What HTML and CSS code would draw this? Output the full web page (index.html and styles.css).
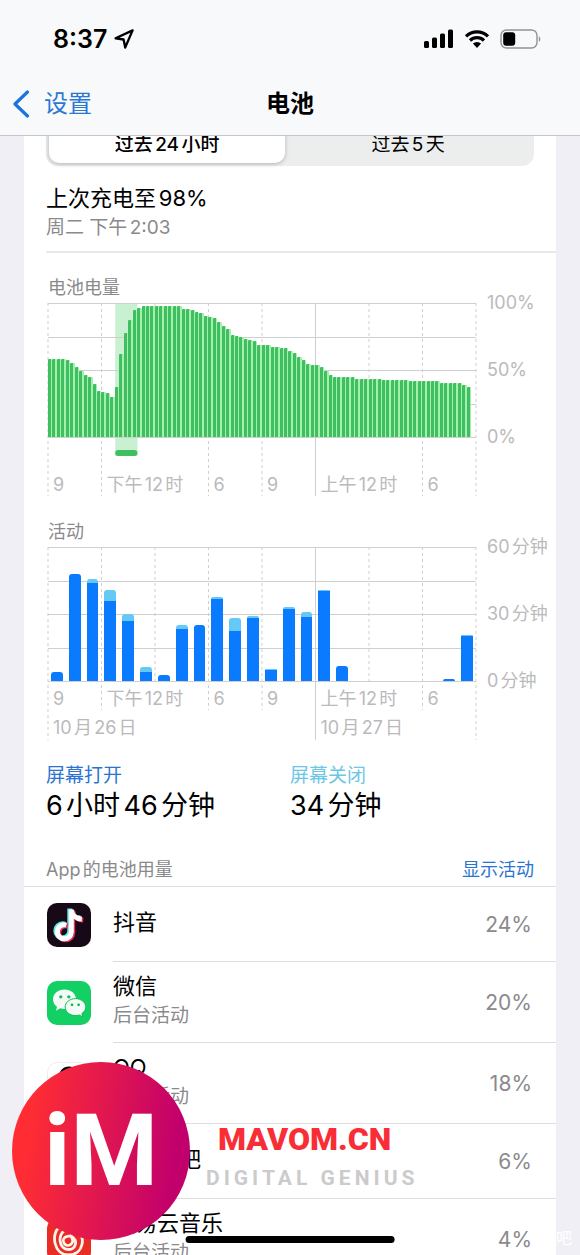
FILE: index.html
```html
<!DOCTYPE html>
<html lang="zh-CN">
<head>
<meta charset="utf-8">
<meta name="viewport" content="width=device-width, initial-scale=1">
<title>电池</title>
<link rel="stylesheet" href="styles.css">
</head>
<body>
<div class="screen">
  <header class="topbar">
    <div class="status">
      <div class="status-time">
        <span>8:37</span>
        <svg class="arrow" viewBox="0 0 20 20" aria-hidden="true"><path d="M18.6 1.4 1.6 9.300l8 1.200 1.600 8z" fill="none" stroke="#000" stroke-width="2.300" stroke-linejoin="round"/></svg>
      </div>
      <div class="status-icons">
        <svg class="signal" viewBox="0 0 30 20" aria-hidden="true"><rect x="0" y="12" width="5" height="7" rx="1.5"/><rect x="8" y="8.500" width="5" height="10.500" rx="1.500"/><rect x="16" y="4.500" width="5" height="14.500" rx="1.500"/><rect x="24" y="0.500" width="5" height="18.500" rx="1.500"/></svg>
        <svg class="wifi" viewBox="0 0 26 20" aria-hidden="true"><path d="M2 7.400a15.800 15.800 0 0 1 22 0M6 11.500a10 10 0 0 1 14 0" fill="none" stroke="#000" stroke-width="3.200"/><path d="M8.900 14.600a6 6 0 0 1 8.200 0L13 19z"/></svg>
        <svg class="battery" viewBox="0 0 42 20" aria-hidden="true"><rect x="1" y="1" width="36" height="18" rx="5.500" fill="none" stroke="#929395" stroke-width="1.400"/><rect x="3.200" y="3.200" width="12" height="13.600" rx="3"/><path d="M38.800 7.200c2 .7 2 4.900 0 5.600z" fill="#929395"/></svg>
      </div>
    </div>
    <nav class="nav">
      <a class="back" href="#settings">
        <svg viewBox="0 0 18 28" aria-hidden="true"><path d="M15.500 2 3 14l12.500 12" fill="none" stroke="#1d74dd" stroke-width="3.200" stroke-linecap="round" stroke-linejoin="round"/></svg>
        <span>设置</span>
      </a>
      <h1>电池</h1>
    </nav>
  </header>

  <main class="content">
    <section class="card">
      <div class="segmented">
        <button class="segment selected" type="button" aria-pressed="true">过去24小时</button>
        <button class="segment" type="button" aria-pressed="false">过去5天</button>
      </div>

      <div class="charge">
        <h2>上次充电至98%</h2>
        <p>周二 下午2:03</p>
      </div>

      <h3 class="chart-title">电池电量</h3>
      <div class="chart">
        <div class="plot-area">
          <svg class="grid" id="battery-grid" aria-hidden="true"></svg>
          <div class="bars" id="battery-bars"></div>
          <div class="hours low"><span>9</span><span>下午12时</span><span></span><span>6</span><span>9</span><span>上午12时</span><span></span><span>6</span></div>
        </div>
        <div class="axis"><span>100%</span><span>50%</span><span>0%</span></div>
      </div>

      <h3 class="chart-title second">活动</h3>
      <div class="chart">
        <div class="plot-area">
          <svg class="grid" id="activity-grid" aria-hidden="true"></svg>
          <div class="bars" id="activity-bars"></div>
          <div class="hours"><span>9</span><span>下午12时</span><span></span><span>6</span><span>9</span><span>上午12时</span><span></span><span>6</span></div>
          <div class="hours"><span>10月26日</span><span></span><span></span><span></span><span></span><span>10月27日</span></div>
        </div>
        <div class="axis"><span>60分钟</span><span>30分钟</span><span>0分钟</span></div>
      </div>

      <dl class="totals">
        <div><dt class="on">屏幕打开</dt><dd>6小时46分钟</dd></div>
        <div><dt class="off">屏幕关闭</dt><dd>34分钟</dd></div>
      </dl>

      <div class="usage-head">
        <h3>App的电池用量</h3>
        <button type="button">显示活动</button>
      </div>
      <ul class="apps">
        <li>
          <svg class="icon" viewBox="0 0 44 44" aria-hidden="true"><rect width="44" height="44" rx="10" fill="#170915"/><g fill="none" stroke-width="5"><g stroke="#5ee9e6"><path d="M22.800 5.500V28a7 7 0 1 1-7-7.200c1 0 1.400.1 2 .3M22.800 6c.6 5 4.600 8.700 10.500 9"/></g><g stroke="#f0305a"><path d="M25.700 7.500V30a7 7 0 1 1-7-7.200c1 0 1.400.1 2 .3M25.700 8c.6 5 4.600 8.700 10.500 9"/></g><g stroke="#fff"><path d="M24.300 6.500V29a7 7 0 1 1-7-7.200c1 0 1.400.1 2 .3M24.300 7c.6 5 4.600 8.700 10.500 9"/></g></g></svg>
          <div class="row"><div class="name"><b>抖音</b></div><span class="pct">24%</span></div>
        </li>
        <li>
          <svg class="icon" viewBox="0 0 44 44" aria-hidden="true"><rect width="44" height="44" rx="10" fill="#12d063"/><path d="M17.500 8.500C10.900 8.500 6 12.800 6 18.200c0 3 1.500 5.700 4 7.500l-1 4 4.300-2.400c1.400.4 2.800.6 4.200.6 6.400 0 11.500-4.300 11.500-9.700S23.900 8.500 17.500 8.500z" fill="#f4fbf6"/><path d="M28.500 17.600c-5.800 0-10.300 3.800-10.300 8.500s4.500 8.500 10.300 8.500c1.200 0 2.500-.2 3.700-.6l3.600 1.900-.9-3.400c2.400-1.600 3.900-3.900 3.900-6.400 0-4.700-4.700-8.500-10.300-8.500z" fill="#f4fbf6" stroke="#12b95a"/><g fill="#12b95a"><circle cx="13.800" cy="15.800" r="1.600"/><circle cx="21.800" cy="15.800" r="1.600"/><circle cx="25" cy="23.800" r="1.400"/><circle cx="31.600" cy="23.800" r="1.400"/></g></svg>
          <div class="row"><div class="name"><b>微信</b><small>后台活动</small></div><span class="pct">20%</span></div>
        </li>
        <li>
          <svg class="icon" viewBox="0 0 44 44" aria-hidden="true"><rect x=".5" y=".5" width="43" height="43" rx="10" fill="#fff" stroke="#ececee"/><path d="M22 4.500c-6 0-10 4.300-10 10.500 0 3-4 7-4 12 0 2 1 3 3 0 1 7 6 11 11 11s10-4 11-11c2 3 3 2 3 0 0-5-4-9-4-12 0-6.200-4-10.500-10-10.500z"/></svg>
          <div class="row"><div class="name"><b>QQ</b><small>后台活动</small></div><span class="pct">18%</span></div>
        </li>
        <li>
          <svg class="icon" viewBox="0 0 44 44" aria-hidden="true"><rect width="44" height="44" rx="10" fill="#2f7df6"/></svg>
          <div class="row"><div class="name"><b>百度贴吧</b></div><span class="pct">6%</span></div>
        </li>
        <li>
          <svg class="icon" viewBox="0 0 44 44" aria-hidden="true"><rect width="44" height="44" rx="10" fill="#ea2d24"/><path d="M27.500 4.500c-3-1.500-5.500.5-5 3.500l2.500 12.500a4.600 4.600 0 1 1-7-1.200c2-1.600 6-1.800 8.300.4 4.600 4.400 1.600 11.800-4.300 11.800C11 31.500 10.500 15.500 18.500 12M12 9.500C4 15.500 6.500 37 21.500 37 37 37 39 18 30 12" fill="none" stroke="#fff3ea" stroke-width="2.800" stroke-linecap="round"/></svg>
          <div class="row"><div class="name"><b>网易云音乐</b><small>后台活动</small></div><span class="pct">4%</span></div>
        </li>
      </ul>
    </section>
  </main>

  <div class="brand">
    <div class="disc">iM</div>
    <div class="brand-text"><strong>MAVOM.CN</strong><span>DIGITAL GENIUS</span></div>
  </div>
  <div class="home-indicator"></div>
  <span class="credit">吧</span>
</div>
<script src="app.js"></script>
</body>
</html>
```
FILE: styles.css
```css
* { box-sizing: border-box; }

body {
  margin: 0;
  background: #f0eff5;
  color: #000;
  font-family: Inter, "Noto Sans CJK SC", sans-serif;
  text-autospace: normal;
}

h1, h2, h3, p, ul, dl, dd { margin: 0; padding: 0; font-weight: 400; }

button {
  border: 0;
  padding: 0;
  background: none;
  color: inherit;
  font: inherit;
  text-autospace: inherit;
}

.screen {
  position: relative;
  display: flex;
  flex-direction: column;
  height: 100vh;
  overflow: hidden;
}

.topbar {
  flex: none;
  background: #f8f9fa;
  border-bottom: 1px solid #c6c6c9;
}

.status {
  display: flex;
  align-items: center;
  justify-content: space-between;
  height: 78px;
  padding: 0 38px 0 53px;
}

.status-time {
  display: flex;
  align-items: center;
  gap: 7px;
  font-size: 25px;
  font-weight: 600;
}

.arrow { width: 20px; height: 20px; }
.status-icons { display: flex; align-items: center; gap: 10px; }
.signal { width: 30px; height: 20px; }
.wifi { width: 26px; height: 20px; }
.battery { width: 42px; height: 20px; }

.nav {
  display: grid;
  grid-template-columns: 1fr auto 1fr;
  align-items: center;
  height: 57px;
  padding: 0 12px 5px;
}

.nav h1 { font-size: 24px; line-height: 36px; font-weight: 700; }

.back {
  display: flex;
  align-items: center;
  gap: 14px;
  color: #2a78d3;
  font-size: 24px;
  line-height: 36px;
  text-decoration: none;
}

.back svg { width: 18px; height: 28px; }

.content {
  flex: 1;
  min-height: 0;
  padding: 0 24px;
  overflow: hidden auto;
  scrollbar-width: none;
}

.card {
  margin-top: -16px;
  background: #fff;
}

.segmented {
  display: grid;
  grid-template-columns: 49fr 51fr;
  height: 46px;
  margin: 0 22px;
  padding: 3px;
  border-radius: 12px;
  background: #eceeee;
}

.segment {
  padding-top: 4px;
  border-radius: 10px;
  font-size: 19px;
  line-height: 36px;
}

.segment.selected {
  background: #fff;
  font-weight: 500;
  box-shadow: 0 1px 4px #00000040;
}

.charge {
  margin-left: 22px;
  padding: 16px 0 9px;
  border-bottom: 2px solid #e9e9ea;
}

.charge h2 { font-size: 22px; line-height: 32px; }
.charge p { color: #8a8a8c; font-size: 19px; line-height: 28px; }

.chart-title {
  margin: 22px 24px 2px;
  color: #8a8a8c;
  font-size: 18px;
  line-height: 26px;
}

.chart-title.second { margin-top: 23px; }

.chart {
  display: grid;
  grid-template-columns: 1fr 80px;
  padding-left: 24px;
  color: #bababc;
  font-size: 18px;
}

.plot-area { position: relative; height: 193px; }

.grid {
  position: absolute;
  inset: 0;
  width: 100%;
  height: 100%;
  overflow: visible;
}

.bars {
  position: relative;
  display: flex;
  align-items: flex-end;
  height: 134px;
}

.slot {
  flex: 1;
  background: linear-gradient(to right, #40bf60 0 66%, #a4f0ae 66%);
  border-radius: 1px 1px 0 0;
}

.hour {
  flex: 1;
  display: flex;
  flex-direction: column;
  height: 100%;
  justify-content: flex-end;
  padding: 0 3px;
}

.hour i:first-child { border-radius: 3px 3px 0 0; }
.hour .dark { background: #0a7aff; }
.hour .light { background: #64c9f5; }

.hours {
  position: relative;
  display: grid;
  grid-template-columns: repeat(8, 1fr);
  height: 29px;
  line-height: 36px;
  white-space: nowrap;
}

.hours span { width: 0; padding-left: 5px; }
.hours.low { margin-top: 30px; }

.axis {
  display: flex;
  flex-direction: column;
  justify-content: space-between;
  height: 154px;
  margin-top: -10px;
  padding-left: 11px;
  line-height: 20px;
  white-space: nowrap;
}

.totals {
  display: grid;
  grid-template-columns: 1fr 1fr;
  padding: 22px 22px 0;
}

.totals dt { font-size: 19px; line-height: 28px; }
.totals dd { font-size: 27px; line-height: 32px; }
.totals .on { color: #2a74d0; }
.totals .off { color: #6cc6e6; }

.usage-head {
  display: flex;
  justify-content: space-between;
  padding: 35px 22px 3px;
  border-bottom: 1px solid #dedee0;
  font-size: 18px;
  line-height: 26px;
}

.usage-head h3 { color: #8a8a8c; font-size: 18px; }
.usage-head button { color: #2a74d0; }

.apps { list-style: none; }

.apps li {
  display: flex;
  align-items: center;
  gap: 22px;
  padding-left: 23px;
}

.icon { flex: none; width: 44px; height: 44px; }

.row {
  flex: 1;
  display: flex;
  align-items: center;
  justify-content: space-between;
  min-height: 75px;
  padding: 8px 24px 8px 0;
  border-bottom: 1px solid #dedee0;
}

.name { display: flex; flex-direction: column; padding-bottom: 4px; }
.name b { font-size: 22px; line-height: 32px; font-weight: 400; }
.name small { color: #8a8a8c; font-size: 19px; line-height: 28px; }
.pct { color: #8a8a8c; font-size: 21px; }

.brand {
  position: absolute;
  left: 12px;
  bottom: 15px;
  display: flex;
  align-items: center;
  gap: 16px;
}

.disc {
  width: 178px;
  height: 178px;
  border-radius: 50%;
  background: linear-gradient(97deg, #ff2d33 12%, #c2006c 88%);
  color: #fff;
  font: 700 100px/178px Roboto, sans-serif;
  text-align: center;
}

.brand-text {
  display: flex;
  flex-direction: column;
  padding-top: 14px;
  font-family: Roboto, sans-serif;
  font-weight: 700;
}

.brand-text strong { padding-left: 12px; color: #f82d35; font-size: 32px; line-height: 40px; }
.brand-text span { color: #cbcbcb; font-size: 21px; line-height: 38px; letter-spacing: 4px; }

.home-indicator {
  position: absolute;
  left: 50%;
  bottom: 12px;
  width: 36%;
  height: 7px;
  border-radius: 4px;
  background: #000;
  transform: translateX(-50%);
}

.credit {
  position: absolute;
  right: 8px;
  bottom: 5px;
  color: #fff;
  font-size: 16px;
  line-height: 24px;
}
```
FILE: app.js
```js
// Battery level in percent, one value per quarter hour.
const levels = [
  58.5, 58.5, 58.5, 58.5, 57.5, 55.5, 52.5, 49.5, 46.5, 44.5, 39.5, 34.5, 33.5, 32.5, 29.5,
  37.5, 62, 77.5, 87.5, 94.5, 96.5, 97.5, 97.5, 97.5, 97.5, 97.5, 97.5, 97.5, 97.5, 97.5,
  95.5, 95.5, 94.5, 93.5, 92.5, 90.5, 89.5, 88.5, 85.5, 82.5, 80.5, 76.5, 75.5, 74.5, 73.5,
  72.5, 71.5, 68.5, 68.5, 68.5, 67.5, 67.5, 66.5, 66.5, 64.5, 62.5, 59.5, 57.5, 54.5, 53.5,
  53.5, 52.5, 49.5, 46.5, 44.5, 44.5, 44.5, 44.5, 44.5, 43.5, 43.5, 43.5, 43.5, 43.5, 43.5,
  42.5, 42.5, 42.5, 42.5, 42.5, 42.5, 41.5, 41.5, 41.5, 41.5, 41.5, 41.5, 41.5,
  40.5, 40.5, 40.5, 40.5, 40.5, 38.5, 37.5, 0
];

// Activity per hour as [screen on, screen off], in percent of an hour.
const activity = [
  [6.5, 0], [80, 0], [73, 3], [60, 8], [44.5, 5.5], [6.5, 4], [4.7, 0], [38.5, 3],
  [41.5, 0], [61.5, 1], [37, 10], [47, 1.5], [8, 1], [53.5, 2], [48, 3.5], [67, 1],
  [11.5, 0], [0, 0], [0, 0], [0, 0], [0, 0], [0, 0], [1.5, 0], [33.5, 1]
];

const plotHeight = 134;

function line(x1, y1, x2, y2, dashed) {
  const dash = dashed ? ' stroke-dasharray="3 3"' : '';
  return `<line x1="${x1}%" y1="${y1}" x2="${x2}%" y2="${y2}" stroke="#cfcfd1"${dash}/>`;
}

function grid(id, ends, extra) {
  let out = extra || '';
  for (let i = 0; i <= 4; i++) {
    const y = Math.round(plotHeight * i / 4) + 0.5;
    out += line(0, y, 100, y, false);
  }
  ends.forEach((end, i) => { out += line(i * 12.5, 0, i * 12.5, end, i !== 5); });
  document.getElementById(id).innerHTML = out;
}

const band =
  '<rect x="15.7%" y="0" width="5.2%" height="153" fill="#caf0d2"/>' +
  '<rect x="15.7%" y="147" width="5.2%" height="6" rx="3" fill="#40bf60"/>';

grid('battery-grid', [193, 193, 134, 193, 193, 193, 134, 193, 193], band);
grid('activity-grid', [193, 163, 134, 163, 163, 193, 134, 163, 193]);

document.getElementById('battery-bars').innerHTML =
  levels.map(v => `<div class="slot" style="height:${v}%"></div>`).join('');

document.getElementById('activity-bars').innerHTML =
  activity.map(([on, off]) =>
    '<div class="hour">' +
    (off ? `<i class="light" style="height:${off}%"></i>` : '') +
    (on ? `<i class="dark" style="height:${on}%"></i>` : '') +
    '</div>').join('');
```
